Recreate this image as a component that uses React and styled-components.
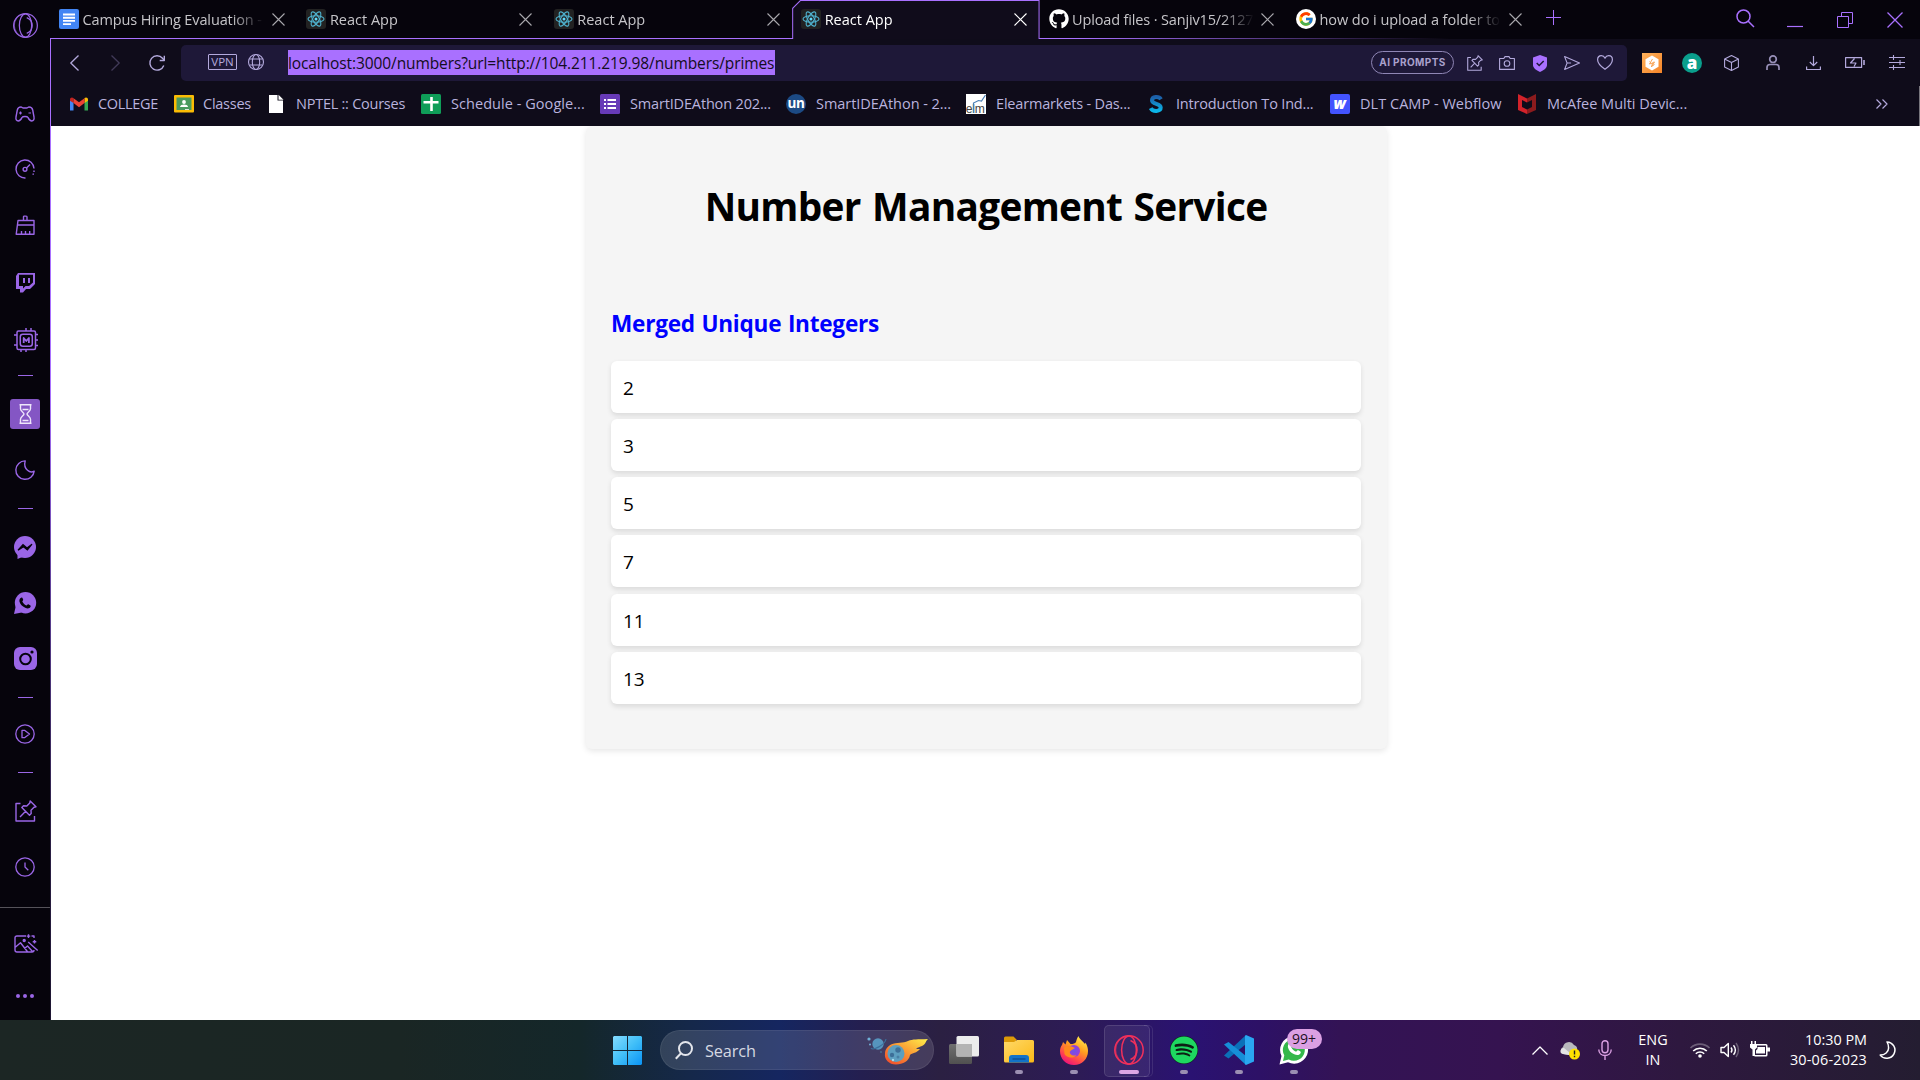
import React from 'react';
import styled, { createGlobalStyle } from 'styled-components';
import { FaGithub, FaSpotify } from 'react-icons/fa';
import { FcGoogle } from 'react-icons/fc';

const accent = '#a970ff';
const sideInk = '#9a66e6';
const toolInk = '#b3a9dc';

const Global = createGlobalStyle`
  * { box-sizing: border-box; }
  body {
    margin: 0;
    font-family: "Open Sans", "Noto Sans", sans-serif;
    background: #fff;
    overflow: hidden;
  }
  svg { display: block; flex: none; overflow: visible; }
`;

/* ---------- shell ---------- */
const Screen = styled.div`
  width: 1920px;
  height: 1080px;
  display: flex;
  flex-direction: column;
`;
const Browser = styled.div`
  height: 1020px;
  display: flex;
  background: #06040c;
`;
const Sidebar = styled.nav`
  width: 50px;
  display: flex;
  flex-direction: column;
`;
const SideSlot = styled.div`
  height: ${(p) => p.$h}px;
  padding-left: ${(p) => p.$pl || 0}px;
  display: flex;
  align-items: center;
  justify-content: center;
  flex: none;
`;
const Dash = styled.div`
  width: 15px;
  height: 1px;
  margin-left: 1px;
  background: ${sideInk};
`;
const SideLine = styled.div`
  height: 1px;
  background: #55535a;
`;
const PinnedBox = styled.div`
  width: 30px;
  height: 30px;
  border-radius: 3px;
  background: #8456c4;
  display: grid;
  place-items: center;
`;
const Main = styled.div`
  flex: 1;
  display: flex;
  flex-direction: column;
  min-width: 0;
`;

/* ---------- tab strip ---------- */
const TabStrip = styled.div`
  height: 39px;
  display: flex;
  background: linear-gradient(90deg, ${accent} 0, ${accent} 1030px, rgba(169, 112, 255, 0) 1400px) bottom / 100% 1px no-repeat;
`;
const TabBox = styled.div`
  width: 247.4px;
  height: 39px;
  display: flex;
  align-items: center;
  padding: 0 12.5px 1px 9px;
  gap: 3px;
  position: relative;
  z-index: 0;
  color: ${(p) => (p.$active ? '#fff' : '#c6c5c9')};
  ${(p) =>
    p.$active &&
    `
    background: ${accent};
    clip-path: polygon(8px 0, 100% 0, 100% 100%, 0 100%, 0 8px);
    &::before {
      content: "";
      position: absolute;
      z-index: -1;
      inset: 1px 1px 0 1px;
      background: #100c1b;
      clip-path: polygon(7.5px 0, 100% 0, 100% 100%, 0 100%, 0 7.5px);
    }
  `}
`;
const TabTitle = styled.div`
  flex: 1;
  min-width: 0;
  height: 24px;
  padding: 2px 0 0 0.5px;
  line-height: 22px;
  font-size: 14.5px;
  letter-spacing: ${(p) => p.$ls}px;
  white-space: nowrap;
  margin-right: 4px;
  mask-image: linear-gradient(90deg, #000 150px, transparent 182px);
`;
const ReactBadge = styled.div`
  width: 20px;
  height: 20px;
  border-radius: 3px;
  background: #222222;
  display: grid;
  place-items: center;
`;
const GoogleBadge = styled(ReactBadge)`
  border-radius: 50%;
  background: #fff;
`;
const WindowButtons = styled.div`
  display: flex;
  align-items: center;
  margin-left: auto;
`;
const Slot = styled.div`
  width: ${(p) => p.$w}px;
  display: flex;
  align-items: center;
  justify-content: center;
  flex: none;
`;

/* ---------- toolbar ---------- */
const Body = styled.div`
  flex: 1;
  display: flex;
  background: linear-gradient(180deg, ${accent} 0, ${accent} 350px, #5c3f94 560px, #2c2046 780px, #1d1531 100%);
  padding-left: 1px;
  min-height: 0;
`;
const Content = styled.div`
  flex: 1;
  display: flex;
  flex-direction: column;
  background: #0f0c1a;
`;
const Toolbar = styled.div`
  height: 47px;
  display: flex;
  align-items: center;
  padding: 0 4px 0 3px;
`;
const UrlField = styled.div`
  width: 1446px;
  height: 36px;
  margin: 1px 5px 0 3px;
  border-radius: 5px;
  background: #1e1838;
  display: flex;
  align-items: center;
  padding: 0 6px 0 27px;
`;
const Vpn = styled.div`
  width: 29px;
  height: 16px;
  border: 1px solid ${toolInk};
  border-radius: 1px;
  color: ${toolInk};
  font-size: 11.5px;
  line-height: 14px;
  text-align: center;
  margin: 0 11px 2px 0;
`;
const Url = styled.div`
  height: 25px;
  width: 487px;
  margin: 0 auto 1px 24px;
  line-height: 27px;
  font-size: 15.5px;
  letter-spacing: -0.1px;
  white-space: nowrap;
  background: ${accent};
  color: #130d22;
`;
const Prompts = styled.div`
  width: 83px;
  height: 23px;
  border: 1.5px solid #8f86b5;
  border-radius: 12px;
  color: #aaa1cc;
  font: 700 10px/20px Inter, sans-serif;
  letter-spacing: 0.4px;
  text-align: center;
  margin: 0 4.5px 1px 0;
`;
const Orange = styled.div`
  width: 20px;
  height: 20px;
  background: linear-gradient(135deg, #ffb35c, #f58428);
  display: grid;
  place-items: center;
`;

/* ---------- bookmarks ---------- */
const Bookmarks = styled.div`
  height: 40px;
  display: flex;
  align-items: center;
  padding: 0 31px 5px 18px;
  border-right: 1px solid #77757c;
  color: #b9b3de;
`;
const Bookmark = styled.div`
  width: ${(p) => p.$w}px;
  display: flex;
  align-items: center;
  gap: ${(p) => p.$gap}px;
  flex: none;
  white-space: nowrap;
  font-size: 14.5px;
  letter-spacing: ${(p) => p.$ls}px;
`;
const More = styled.div`
  margin-left: auto;
`;

/* ---------- page ---------- */
const Page = styled.main`
  flex: 1;
  background: #fff;
  overflow: hidden;
`;
const Card = styled.section`
  width: 801px;
  height: 623px;
  margin-left: 535px;
  padding: 0 26px 0 25px;
  border-radius: 6px;
  background: #f5f5f5;
  box-shadow: 0 2px 6px rgba(0, 0, 0, 0.1);
  display: flex;
  flex-direction: column;
`;
const Title = styled.h1`
  margin: 53px 0 0;
  height: 54px;
  line-height: 54px;
  font-size: 38.8px;
  letter-spacing: -0.7px;
  word-spacing: 2px;
  text-align: center;
  color: #000;
`;
const Subtitle = styled.h2`
  margin: 74px 0 0;
  height: 32px;
  line-height: 33px;
  font-size: 22.6px;
  letter-spacing: -0.25px;
  word-spacing: 1px;
  color: #0000ff;
`;
const List = styled.ul`
  margin: 22px 0 0;
  padding: 0;
  list-style: none;
  display: flex;
  flex-direction: column;
  gap: 6.15px;
`;
const Item = styled.li`
  height: 52px;
  padding-left: 12px;
  line-height: 55px;
  font-size: 19px;
  color: #000;
  background: #fff;
  border-radius: 6px;
  box-shadow: 0 2.5px 5px rgba(0, 0, 0, 0.1);
`;

/* ---------- taskbar ---------- */
const Taskbar = styled.footer`
  height: 60px;
  display: flex;
  align-items: center;
  padding: 0 13px 0 600px;
  background: linear-gradient(
    90deg,
    #1c2624 0, #1a2624 400px, #14272a 580px, #15284a 690px, #152660 780px, #241f50 860px,
    #2b2042 940px, #2d1b56 1080px, #2a1272 1190px, #2d1166 1260px, #331355 1340px,
    #351350 1500px, #2e183f 1680px, #241d31 1920px
  );
`;
const SearchBox = styled.div`
  width: 274px;
  height: 40px;
  margin: 0 3px 0 4.5px;
  padding: 0 4px 0 14px;
  border-radius: 20px;
  border: 1px solid rgba(255, 255, 255, 0.07);
  background: rgba(255, 255, 255, 0.13);
  display: flex;
  align-items: center;
  color: #d6d9e2;
  font-size: 16.3px;
  letter-spacing: -0.1px;
`;
const SearchText = styled.span`
  margin: 1px auto 0 12.5px;
`;
const AppSlot = styled.div`
  width: 55px;
  height: 60px;
  display: flex;
  flex-direction: column;
  align-items: center;
  position: relative;
`;
const IconArea = styled.div`
  height: 30px;
  margin: 15px 0 10px;
  display: grid;
  place-items: center;
`;
const Running = styled.div`
  width: ${(p) => (p.$on ? 20 : 8)}px;
  height: 4px;
  border-radius: 2px;
  background: ${(p) => (p.$on ? '#dba0e3' : '#9b8fb2')};
  margin-top: -5px;
`;
const ActiveApp = styled(AppSlot)`
  &::before {
    content: "";
    position: absolute;
    left: 2px;
    top: 5px;
    width: 44px;
    height: 50px;
    border-radius: 5px;
    border: 1px solid rgba(255, 255, 255, 0.12);
    background: rgba(255, 255, 255, 0.07);
  }
  &::after {
    content: "";
    position: absolute;
    left: 42px;
    top: 5px;
    width: 8px;
    height: 50px;
    border-radius: 0 5px 5px 0;
    border: 1px solid rgba(255, 255, 255, 0.1);
    border-left: 0;
  }
`;
const Count = styled.div`
  position: absolute;
  left: 20px;
  top: 9px;
  width: 35px;
  height: 20px;
  border-radius: 10px;
  background: #dba0e3;
  color: #1c0f22;
  font-size: 14px;
  line-height: 20px;
  text-align: center;
`;
const Tray = styled.div`
  margin-left: auto;
  display: flex;
  align-items: center;
  color: #fff;
`;
const Lines = styled.div`
  width: ${(p) => p.$w}px;
  padding-right: ${(p) => p.$pr || 0}px;
  text-align: ${(p) => p.$align};
  font-size: 14.4px;
  line-height: 20px;
  white-space: nowrap;
`;
const DateLine = styled.div`
  letter-spacing: 0.2px;
`;

/* ---------- drawing helpers ---------- */
const Line = ({ w = 20, h = w, box = `0 0 ${w} ${h}`, c = toolInk, s = 1.2, children }) => (
  <svg width={w} height={h} viewBox={box} fill="none" stroke={c} strokeWidth={s} strokeLinejoin="round">
    {children}
  </svg>
);

const Cross = ({ size = 13, c, s = 1.1 }) => (
  <Line w={size} c={c} s={s}>
    <path d={`M.5.5L${size - 0.5} ${size - 0.5}M${size - 0.5}.5L.5 ${size - 0.5}`} />
  </Line>
);

const OperaMark = ({ size, c, s = 1.2 }) => (
  <Line w={size} box="0 0 30 30" c={c} s={s}>
    <circle cx="15" cy="15" r="14.2" />
    <ellipse cx="15" cy="15" rx="7.4" ry="14" />
    <path d="M14 1.2C5 2 1.500 9 1.500 15s4 13 12.500 13.800" strokeOpacity=".6" />
    <path d="M16.500 5.500c5 2 6.500 6 6.500 9.500s-1.500 7.500-6.500 9.500" />
  </Line>
);

const ReactMark = () => (
  <ReactBadge>
    <Line w={18} box="-9 -9 18 18" c="#4fb3cf" s={1.1}>
      <ellipse rx="8" ry="3.200" />
      <ellipse rx="8" ry="3.200" transform="rotate(60)" />
      <ellipse rx="8" ry="3.200" transform="rotate(120)" />
      <circle r="1.500" fill="#61dafb" stroke="none" />
    </Line>
  </ReactBadge>
);

const DocsMark = () => (
  <svg width="20" height="20">
    <rect width="20" height="20" rx="2" fill="#4285f4" />
    <path d="M4 5.500h12M4 8.700h12M4 11.900h12M4 15.100h8" stroke="#fff" strokeWidth="1.900" />
  </svg>
);

const PinMark = ({ size, c, s }) => (
  <Line w={size} box="0 0 22 22" c={c} s={s}>
    <path d="M5.500 3.500H1v17.500h18.500v-5" />
    <path d="M15.200 1l5.800 5.800-2 .4-3 3 .2 3.300-1.700 1.700-7.700-7.700 1.700-1.700 3.300.2 3-3zM10.600 11.300L5 17" />
  </Line>
);

const Gamepad = () => (
  <Line w={20} h={16} c={sideInk} s={1.4}>
    <path d="M6 1C3.500 1 2.700 2 2.300 4L1 11c-.4 2.500.5 4 2.300 4 2 0 2.700-1.500 3.700-3.500.4-.8 1-1 3-1s2.600.2 3 1c1 2 1.700 3.500 3.700 3.500 1.800 0 2.700-1.500 2.300-4l-1.300-7C17.300 2 16.500 1 14 1c-1 0-1.300 1-2.300 1H8.300C7.300 2 7 1 6 1z" />
    <path d="M5.500 5.500v3M4 7h3M13.500 7h2.500" strokeWidth="1.200" />
  </Line>
);
const Gauge = () => (
  <Line w={20} c={sideInk} s={1.4}>
    <path d="M10.500 19A9 9 0 1 1 19 9.500" />
    <path d="M19 11.500v1.500M18.500 14.500l-.6 1.300" />
    <circle cx="10" cy="10.300" r="1.900" />
    <path d="M11.500 9l3.500-3.500" />
  </Line>
);
const Brush = () => (
  <Line w={20} c={sideInk} s={1.4}>
    <path d="M8.500 5.500V1.700c0-.8 3.500-.8 3.500 0v3.800M3 5.500h16v13.800H1.200zM2.500 10H19M6.500 19v-3M10.500 19v-3M14.700 19v-3" />
  </Line>
);
const Twitch = () => (
  <svg width="19" height="20" viewBox="0 0 19 20">
    <path fillRule="evenodd" fill={sideInk} d="M2 0h17v11l-5 5h-4l-3 3.500H4V16H0V3zM3 1.800V13h4v2.500L9.500 13H13l4-3.500V1.800zM7 5h2v5H7zM12 5h2v5h-2z" />
  </svg>
);
const Chip = () => (
  <Line w={24} c={sideInk} s={1.5}>
    <rect x="3" y="3" width="18.500" height="18.500" rx="1.500" />
    <rect x="6.300" y="6.300" width="12" height="12" rx="2.500" />
    <path d="M12 0v3M17 0v3M12 21v3M7 21v3M0 7h3M0 17h3M21 6.500h3M21 12h3M21 17.500h3" />
    <path d="M9.700 15v-5l2.600 3 2.600-3v5" strokeWidth="1.800" />
  </Line>
);
const Hourglass = () => (
  <Line w={13} h={20} c="#eee6fb" s={1.4}>
    <path d="M.5.8h12M.5 19.200h12M1.500.8v4c0 2.500 3.500 3.500 3.500 5.200s-3.500 2.700-3.500 5.200v4M11.500.8v4C11.500 7.300 8 8.300 8 10s3.500 2.700 3.500 5.200v4M3.500 5.500h6M3.500 16.500h6" />
  </Line>
);
const Crescent = () => (
  <Line w={20} c={sideInk} s={1.4}>
    <path d="M10.200.9a9.200 9.200 0 1 0 9 10.200c-2 1.200-4.600 1-6.700-.8-2.700-2.300-3.200-6-2.300-9.400z" />
  </Line>
);
const Messenger = () => (
  <svg width="22" height="23">
    <circle cx="11" cy="11" r="11" fill={sideInk} />
    <path d="M3.500 16v7l6-2.500z" fill={sideInk} />
    <path d="M4 14.200l5-5.500 4 3.300 5-3.800-4.600 5.800-3.900-3.300z" fill="#06040c" stroke="#06040c" strokeWidth="1.200" />
  </svg>
);
const WhatsSide = () => (
  <svg width="22" height="22">
    <circle cx="11.500" cy="10.700" r="10.700" fill={sideInk} />
    <path d="M0 22l1.800-8 6 6.500z" fill={sideInk} />
    <path d="M6.300 6.300c1.400-1.500 2.100-1 2.700.8.4 1.100 0 1.500-.7 2.300.9 2 2.400 3.300 4.400 4.200.7-.9 1.200-1.600 2-1.200 2.300 1 2.400 1.300 1.700 2.600-1 1.700-3 1.700-5.200.8-3-1.300-5-3.500-5.700-6-.3-1.300 0-2.600.8-3.500z" fill="#06040c" />
  </svg>
);
const Insta = () => (
  <svg width="23" height="23">
    <rect width="23" height="23" rx="6" fill={sideInk} />
    <circle cx="11.500" cy="12" r="5.300" fill="none" stroke="#06040c" strokeWidth="2" />
    <circle cx="18" cy="5" r="1.600" fill="#06040c" />
  </svg>
);
const PlayRound = () => (
  <Line w={20} c={sideInk} s={1.3}>
    <circle cx="10" cy="10" r="9.200" />
    <path d="M7 6.300v7.400h2.500L14.500 10 9.500 6.300z" />
  </Line>
);
const Clock = () => (
  <Line w={20} c={sideInk} s={1.3}>
    <circle cx="10" cy="10" r="9.200" />
    <path d="M10 5.500V10l3.300 3.300" />
  </Line>
);
const MagicImage = () => (
  <Line w={24} h={20} c={sideInk} s={1.4}>
    <path d="M12 2H3Q1 2 1 4v12q0 2 2 2h15q2 0 2-2M1 13.500l5.500-4.700 7 9M10.500 14.500l3-2.500 5.500 6" />
    <circle cx="10.200" cy="6.500" r="1" fill={sideInk} />
    <path d="M14.200 8l9.500 8.500M14.500.3v3.600M12.700 2.100h3.600M20.500 6v3.600M18.700 7.800h3.600M17.500 2H20v2" />
  </Line>
);
const Dots = () => (
  <svg width="18" height="4" fill={sideInk}>
    <circle cx="2" cy="2" r="2" /><circle cx="9" cy="2" r="2" /><circle cx="16" cy="2" r="2" />
  </svg>
);

/* ---------- bookmark marks ---------- */
const marks = {
  gmail: (
    <svg width="20" height="20">
      <path d="M1 5v11.500h3.500V8z" fill="#4285f4" /><path d="M15.500 8v8.500H19V5z" fill="#34a853" />
      <path d="M1 5.500c0-2 2-2.700 3.500-1.500v5L1 6.700z" fill="#c5221f" /><path d="M19 5.500c0-2-2-2.700-3.500-1.500v5L19 6.700z" fill="#fbbc04" />
      <path d="M4.500 4.200L10 8.300l5.500-4.100V9L10 13.200 4.500 9z" fill="#ea4335" />
    </svg>
  ),
  classroom: (
    <svg width="20" height="20">
      <rect y="1" width="20" height="17.500" rx="1" fill="#fbbc04" /><rect x="2.500" y="3.500" width="15" height="12.500" fill="#4a9a5e" />
      <circle cx="10" cy="8" r="1.900" fill="#fff" /><path d="M6 13c0-3.300 8-3.300 8 0z" fill="#fff" /><path d="M11 15h4v1h-4z" fill="#dfe8df" />
    </svg>
  ),
  file: (
    <svg width="20" height="20">
      <path d="M2 1h8.500v5.500H16V19H2z" fill="#fff" /><path d="M11.500.8l5 5h-5z" fill="#fff" />
    </svg>
  ),
  sheet: (
    <svg width="20" height="20">
      <rect width="20" height="20" rx="1.500" fill="#0f9d58" /><path d="M10.500 3v14M2.500 8.300h15" stroke="#fff" strokeWidth="2.600" />
    </svg>
  ),
  form: (
    <svg width="20" height="20">
      <rect width="20" height="20" rx="1.500" fill="#673ab7" />
      <path d="M4 6h2M4 10h2M4 14h2M7.500 6H16M7.500 10H16M7.500 14H16" stroke="#fff" strokeWidth="2.100" />
    </svg>
  ),
  un: (
    <svg width="20" height="20">
      <circle cx="10" cy="10" r="10" fill="#1c4a84" />
      <text x="10" y="14" textAnchor="middle" fontFamily="Open Sans" fontWeight="700" fontSize="13.500" letterSpacing="-.3" fill="#fff">un</text>
    </svg>
  ),
  elm: (
    <svg width="20" height="20">
      <rect width="20" height="20" fill="#fff" />
      <text x="-.3" y="19" fontFamily="Liberation Sans" fontSize="12" textLength="19" lengthAdjust="spacingAndGlyphs" fill="#444">elm</text>
      <path d="M7.500 19V9l5-2.500 3 .5L19.500 1" fill="none" stroke="#4a7fb5" strokeWidth="1.200" />
    </svg>
  ),
  swirl: (
    <svg width="20" height="20">
      <defs><linearGradient id="sw" x2="0" y2="1"><stop offset="0" stopColor="#1d5fa8" /><stop offset="1" stopColor="#0bb5e8" /></linearGradient></defs>
      <path d="M15 5.200C13 2 6 2 6 6.300c0 4.300 8.700 3 8.700 7.300 0 4.200-8 4.400-10 .5" fill="none" stroke="url(#sw)" strokeWidth="4" />
    </svg>
  ),
  webflow: (
    <svg width="20" height="20">
      <rect width="20" height="20" rx="2" fill="#4353ff" />
      <text x="9.800" y="14.800" textAnchor="middle" fontFamily="Open Sans" fontWeight="800" fontStyle="italic" fontSize="15" fill="#fff">w</text>
    </svg>
  ),
  mcafee: (
    <svg width="20" height="20">
      <path d="M1 0l9 4.500v4L5 6v7l5 2.500V20l-9-4z" fill="#d3222a" /><path d="M19 0l-9 4.500v4L15 6v7l-5 2.500V20l9-4z" fill="#8c1b1d" />
    </svg>
  ),
};

const bookmarks = [
  ['gmail', 'COLLEGE', 105, -0.3, 9],
  ['classroom', 'Classes', 93, -0.25, 9],
  ['file', 'NPTEL :: Courses', 154, -0.25, 9],
  ['sheet', 'Schedule - Google...', 179, 0.05],
  ['form', 'SmartIDEAthon 202...', 186, -0.16],
  ['un', 'SmartIDEAthon - 2...', 180, -0.04],
  ['elm', 'Elearmarkets - Das...', 180, -0.18],
  ['swirl', 'Introduction To Ind...', 184, -0.18],
  ['webflow', 'DLT CAMP - Webflow', 187, 0.03],
  ['mcafee', 'McAfee Multi Devic...', 180, 0],
];

const tabs = [
  { icon: <DocsMark />, title: 'Campus Hiring Evaluation -', ls: -0.12 },
  { icon: <ReactMark />, title: 'React App', ls: 0 },
  { icon: <ReactMark />, title: 'React App', ls: 0 },
  { icon: <ReactMark />, title: 'React App', ls: 0, active: true },
  { icon: <FaGithub size={20} color="#fff" />, title: 'Upload files · Sanjiv15/2127', ls: -0.15 },
  { icon: <GoogleBadge><FcGoogle size={16} /></GoogleBadge>, title: 'how do i upload a folder to', ls: -0.05 },
];

/* ---------- taskbar marks ---------- */
const WindowsMark = () => (
  <svg width="29" height="29">
    <defs><linearGradient id="win" x2="1" y2="1"><stop offset="0" stopColor="#84dcff" /><stop offset=".5" stopColor="#41bff8" /><stop offset="1" stopColor="#0a93f5" /></linearGradient></defs>
    <path d="M1 0h13v14H0V1zM15 0h13l1 1v13H15zM0 15h14v14H1l-1-1zM15 15h14v13l-1 1H15z" fill="url(#win)" />
  </svg>
);
const Comet = () => (
  <svg width="62" height="30">
    <defs>
      <linearGradient id="flame" x1="0" y1="1" x2="1" y2="0"><stop offset="0" stopColor="#f0432c" /><stop offset=".5" stopColor="#fb9a34" /><stop offset="1" stopColor="#fff04a" /></linearGradient>
    </defs>
    <circle cx="11" cy="9" r="5.700" fill="#5694bd" />
    <path d="M4 13c2 3 14-3 15-9" fill="none" stroke="#3a6f9c" strokeWidth="1.200" />
    <circle cx="2" cy="4" r="1.600" fill="#6fb0d8" /><circle cx="3" cy="9.500" r="1" fill="#6fb0d8" /><circle cx="14" cy="17" r=".9" fill="#48708f" />
    <path d="M24 9.500c6-2.500 12-1 17-3.500 5-2 9-1.500 20-2-3 3-2 5-6 7-2 1-4 1-6 3l4 0c-3 4-8 4-10 6-1 6-7 9.500-14 9.500-7 0-12-5-11-11 0-4 3-7.500 6-9z" fill="url(#flame)" />
    <circle cx="29" cy="18.500" r="8.500" fill="#5d9fc0" />
    <circle cx="31" cy="15" r="2.700" fill="#3d6f98" /><circle cx="25" cy="20" r="2.200" fill="#3d6f98" /><circle cx="31" cy="22" r="1.500" fill="#487fa5" /><circle cx="26" cy="25" r="1.200" fill="#a9dcee" />
  </svg>
);
const TaskView = () => (
  <svg width="30" height="28">
    <defs>
      <linearGradient id="tvb" x2="0" y2="1"><stop offset="0" stopColor="#707070" /><stop offset="1" stopColor="#505050" /></linearGradient>
    </defs>
    <rect y="8" width="23" height="20" rx="1.500" fill="url(#tvb)" />
    <rect x="7.500" y="0" width="22.500" height="20.500" rx="1.500" fill="#ececec" />
    <rect x="7.500" y="8" width="15.500" height="12.500" fill="#b3b3b3" />
  </svg>
);
const Folder = () => (
  <svg width="30" height="28">
    <defs><linearGradient id="fold" x2="1" y2="1"><stop offset="0" stopColor="#ffd968" /><stop offset="1" stopColor="#fbb917" /></linearGradient></defs>
    <path d="M0 2q0-1.500 1.500-1.500h8L13 4h-1v6H0z" fill="#dd9a07" />
    <path d="M0 6h10l3-2h15.500q1.500 0 1.500 1.500V25q0 1.500-1.500 1.500h-27Q0 26.500 0 25z" fill="url(#fold)" />
    <path d="M5 26.500V22q0-3 3-3h14q3 0 3 3v4.500z" fill="#1273c8" /><path d="M8.500 23h13" stroke="#0a4d90" strokeWidth="1.300" />
  </svg>
);
const Firefox = () => (
  <svg width="28" height="29">
    <defs>
      <linearGradient id="ff" x1=".8" y1="0" x2=".25" y2="1"><stop offset="0" stopColor="#fff04e" /><stop offset=".4" stopColor="#ffa01f" /><stop offset=".75" stopColor="#ff4150" /><stop offset="1" stopColor="#ea0d80" /></linearGradient>
      <radialGradient id="ffc"><stop offset="0" stopColor="#6a55e8" /><stop offset="1" stopColor="#9a3ed8" /></radialGradient>
    </defs>
    <path d="M2 9l1-3 2.500 2.500L7 4l3.500 4c3 0 4.500-.5 5.500-2 .5-2 1-4 2.500-6 .5 3 4.500 5 6.500 8l.5-1.500C27.500 10 28 13 28 15c0 8-6 14-14 14S0 23 0 15c0-2 .7-4.500 2-6z" fill="url(#ff)" />
    <circle cx="14" cy="15" r="6" fill="url(#ffc)" />
    <path d="M4 12c3-3 7-2 11 0-2 2-4 1.500-5 3.500-1 3 3 5 6.500 3.500-3 4-10 3-12-1z" fill="#ff8a1d" />
  </svg>
);
const VsCode = () => (
  <svg width="30" height="30">
    <path d="M22 0v9L4.500 23.500 0 20.500z" fill="#0b70b8" />
    <path d="M22 30v-9L4.500 7 0 9.500z" fill="#168fd8" />
    <path d="M22 0l8 3.500v23L22 30l-1-1V1z" fill="#2aa7f0" />
  </svg>
);
const WhatsApp = () => (
  <svg width="30" height="30">
    <path d="M.5 29.500l2-8.500A14 13.700 0 1 1 9 27.300z" fill="#fff" />
    <path d="M4 26l1.300-5.700A11 10.800 0 1 1 9.800 24.500z" fill="#34b84a" />
    <path d="M10 8.500c1.500-1.500 2.500-1 3 1 .5 1.500 0 1.700-.7 2.700 1 2.200 2.700 3.600 4.900 4.500 1-1 1.300-1.700 2.500-1.200 2.500 1.200 2.500 1.700 1.500 3.200-1.200 1.700-3.500 1.600-6 .6-3.500-1.400-5.500-4-6.200-6.800-.3-1.500.1-3 1-4z" fill="#fff" />
  </svg>
);
const SpotifyMark = styled.div`
  width: 28px;
  height: 28px;
  border-radius: 50%;
  background: #0d1f14;
  display: grid;
  place-items: center;
`;

const Side = () => (
  <Sidebar>
    <SideSlot $h={51}><OperaMark size={25} c={sideInk} s={1.5} /></SideSlot>
    <SideSlot $h={35} />
    <SideSlot $h={55}><Gamepad /></SideSlot>
    <SideSlot $h={55}><Gauge /></SideSlot>
    <SideSlot $h={58}><Brush /></SideSlot>
    <SideSlot $h={57}><Twitch /></SideSlot>
    <SideSlot $h={57} $pl={2}><Chip /></SideSlot>
    <SideSlot $h={14}><Dash /></SideSlot>
    <SideSlot $h={64}><PinnedBox><Hourglass /></PinnedBox></SideSlot>
    <SideSlot $h={48}><Crescent /></SideSlot>
    <SideSlot $h={28}><Dash /></SideSlot>
    <SideSlot $h={50}><Messenger /></SideSlot>
    <SideSlot $h={62}><WhatsSide /></SideSlot>
    <SideSlot $h={49}><Insta /></SideSlot>
    <SideSlot $h={28}><Dash /></SideSlot>
    <SideSlot $h={46}><PlayRound /></SideSlot>
    <SideSlot $h={31}><Dash /></SideSlot>
    <SideSlot $h={46} $pl={2}><PinMark size={22} c={sideInk} s={1.4} /></SideSlot>
    <SideSlot $h={65}><Clock /></SideSlot>
    <SideSlot $h={8} />
    <SideLine />
    <SideSlot $h={72} $pl={2}><MagicImage /></SideSlot>
    <SideSlot $h={31}><Dots /></SideSlot>
  </Sidebar>
);

const Tabs = () => (
  <TabStrip>
    {tabs.map((t, i) => (
      <TabBox key={i} $active={t.active}>
        {t.icon}
        <TabTitle $ls={t.ls}>{t.title}</TabTitle>
        <Cross c={t.active ? '#fff' : '#a9a8ad'} />
      </TabBox>
    ))}
    <Slot $w={38}>
      <Line w={15} c={accent} s={1}><path d="M7.500 0v15M0 7.500h15" transform="translate(0 -2)" /></Line>
    </Slot>
    <WindowButtons>
      <Slot $w={50}>
        <Line w={18} c={accent} s={1.5}><g transform="translate(0 -1)"><circle cx="7.500" cy="6.500" r="6.500" /><path d="M12 11l6 6" /></g></Line>
      </Slot>
      <Slot $w={50}><Line w={16} c={accent}><path d="M0 14.500h16" /></Line></Slot>
      <Slot $w={50}><Line w={16} c={accent} s={1}><path d="M.5 4.500h11v11H.5zM4.500 4.500v-4h11v11h-4" /></Line></Slot>
      <Slot $w={50}><Cross size={16} c={accent} s={1.3} /></Slot>
    </WindowButtons>
  </TabStrip>
);

const Bar = () => (
  <Toolbar>
    <Slot $w={41}><Line w={9} h={16} s={1.3}><path d="M8.500.5L.8 8l7.700 7.500" /></Line></Slot>
    <Slot $w={41}><Line w={9} h={16} c="#413a58" s={1.3}><path d="M.5.5L8.200 8 .5 15.500" /></Line></Slot>
    <Slot $w={42}>
      <Line w={16} s={1.4}><path d="M14.800 10.500A7.200 7.200 0 1 1 13.500 3.200L15 5" /><path d="M15.300.8V5.500H10.700" /></Line>
    </Slot>
    <UrlField>
      <Vpn>VPN</Vpn>
      <Line w={16} s={1.1}>
        <g transform="translate(0 -1)"><circle cx="8" cy="8" r="7.500" /><ellipse cx="8" cy="8" rx="3.700" ry="7.500" /><path d="M1.500 5h13M1.500 11h13" /></g>
      </Line>
      <Url>localhost:3000/numbers?url=http://104.211.219.98/numbers/primes</Url>
      <Prompts>AI PROMPTS</Prompts>
      <Slot $w={32.5}><PinMark size={16} c={toolInk} s={1.5} /></Slot>
      <Slot $w={32.5}>
        <Line w={16} h={14} s={1.1}><path d="M.6 2.500h4.200L6 .6h4l1.200 1.900h4.200v10.900H.6z" /><circle cx="8" cy="7.500" r="2.800" /></Line>
      </Slot>
      <Slot $w={32.5}>
        <svg width="14" height="17"><path d="M7 0l7 2.500v7.500c0 3-3 5-7 7-4-2-7-4-7-7V2.500z" fill={accent} /><path d="M3.700 8l2.500 2.500 4.500-4.500" fill="none" stroke="#1e1838" strokeWidth="1.500" /></svg>
      </Slot>
      <Slot $w={32.5}><Line w={16} h={14} s={1.1}><path d="M.6.6L15.500 7 .6 13.400l2.500-6.400zM3.100 7h4" /></Line></Slot>
      <Slot $w={32.5}><Line w={16} h={16} s={1.2}><path d="M8 14.300C4 11.500.6 8.500.6 4.700.6 2.300 2.300.7 4.300.7 6 .7 7.300 1.600 8 3.200 8.700 1.600 10 .7 11.700.7c2 0 3.700 1.600 3.700 4 0 3.800-3.400 6.800-7.400 9.600z" /></Line></Slot>
    </UrlField>
    <Slot $w={40}>
      <Orange><svg width="16" height="16"><path d="M8 .5l6.500 3.700v7.600L8 15.500l-6.500-3.700V4.200z" fill="#fff" /><path d="M8.500 4L5.500 9l3-1-1 4 3-5-2 .5M5.500 6.500l1 1M9 10.500l1.500-1" fill="none" stroke="#f79a44" strokeWidth=".9" /></svg></Orange>
    </Slot>
    <Slot $w={40}>
      <svg width="20" height="20"><circle cx="10" cy="10" r="10" fill="#0a9f8c" /><text x="10" y="15.500" textAnchor="middle" fontFamily="Open Sans" fontWeight="800" fontSize="17" fill="#fff">a</text></svg>
    </Slot>
    <Slot $w={39}><Line w={15} h={16} s={1.1}><path d="M7.500.6l6.900 3.400v8L7.500 15.400.6 12V4zM.6 4l6.900 3.500L14.400 4M7.500 7.500v8" /></Line></Slot>
    <Slot $w={44}><Line w={14} h={15} c="#9890b8" s={1.7}><circle cx="7" cy="4.200" r="3.300" /><path d="M1 15v-2.500q0-3 3-3h6q3 0 3 3V15" /></Line></Slot>
    <Slot $w={37}><Line w={15} s={1.2}><path d="M7.500 1v9.500M3.800 7l3.700 3.700L11.200 7M.6 11.500v3h13.800v-3" /></Line></Slot>
    <Slot $w={46}><Line w={20} h={12} s={1.2}><path d="M.6.6h16v9.800H.6zM9.500 1.500L5.500 6h5.500l-2 3.500" /><path d="M19 3v5" strokeWidth="1.600" /></Line></Slot>
    <Slot $w={38}><Line w={16} h={15} s={1.1}><path d="M0 2.500h16M0 7.500h16M0 12.500h16M4.500 0v5M11 5v5M4.500 10v5" /></Line></Slot>
  </Toolbar>
);

const AppIcon = ({ children, running }) => (
  <AppSlot>
    <IconArea>{children}</IconArea>
    {running && <Running />}
  </AppSlot>
);

export default function App() {
  return (
    <Screen>
      <Global />
      <Browser>
        <Side />
        <Main>
          <Tabs />
          <Body>
            <Content>
              <Bar />
              <Bookmarks>
                {bookmarks.map(([m, text, w, ls, gap = 10]) => (
                  <Bookmark key={text} $w={w} $ls={ls} $gap={gap}>{marks[m]}{text}</Bookmark>
                ))}
                <More><Line w={12} h={10} s={1.2}><path d="M.5.5L5 5 .5 9.500M6.500.5L11 5 6.500 9.500" /></Line></More>
              </Bookmarks>
              <Page>
                <Card>
                  <Title>Number Management Service</Title>
                  <Subtitle>Merged Unique Integers</Subtitle>
                  <List>
                    {[2, 3, 5, 7, 11, 13].map((n) => <Item key={n}>{n}</Item>)}
                  </List>
                </Card>
              </Page>
            </Content>
          </Body>
        </Main>
      </Browser>
      <Taskbar>
        <AppIcon><WindowsMark /></AppIcon>
        <SearchBox>
          <Line w={18} h={19} c="#e4e6ec" s={2}><circle cx="10.500" cy="7.500" r="6.500" /><path d="M6 12.200L.8 17.700" /></Line>
          <SearchText>Search</SearchText>
          <Comet />
        </SearchBox>
        <AppIcon><TaskView /></AppIcon>
        <AppIcon running><Folder /></AppIcon>
        <AppIcon running><Firefox /></AppIcon>
        <ActiveApp>
          <IconArea><OperaMark size={30} c="#f0214f" s={1.5} /></IconArea>
          <Running $on />
        </ActiveApp>
        <AppIcon running><SpotifyMark><FaSpotify size={28} color="#1ed760" /></SpotifyMark></AppIcon>
        <AppIcon running><VsCode /></AppIcon>
        <AppSlot>
          <IconArea><WhatsApp /></IconArea>
          <Running />
          <Count>99+</Count>
        </AppSlot>
        <Tray>
          <Slot $w={40}><Line w={16} h={9} c="#fff" s={1.3}><path d="M.5 8.500L8 1l7.500 7.500" /></Line></Slot>
          <Slot $w={20}>
            <svg width="20" height="16">
              <path d="M3 12a4 4 0 0 1 0-7 6 6 0 0 1 11-2 4 4 0 0 1 3 5L9 13z" fill="#b9b9bd" /><path d="M3 12a3 3 0 0 1 1-6l6 5-1 2z" fill="#e4e4e6" />
              <circle cx="14.500" cy="12" r="5.500" fill="#ffe100" /><path d="M14.500 8.500v4M14.500 13.700v1.500" stroke="#222" strokeWidth="1.400" />
            </svg>
          </Slot>
          <Slot $w={50}><Line w={14} h={20} c="#dba0e3" s={1.4}><rect x="4" y=".7" width="6" height="12" rx="3" /><path d="M.8 9.500c0 8 12.400 8 12.400 0M7 15.500V20" /></Line></Slot>
          <Lines $w={50} $pr={4} $align="center"><div>ENG</div><div>IN</div></Lines>
          <Slot $w={40}>
            <Line w={20} h={15} c="#fff" s={1.6}>
              <path d="M.5 5a13.500 13.500 0 0 1 19 0" strokeOpacity=".3" />
              <path d="M3.200 8a9.600 9.600 0 0 1 13.600 0M5.800 10.700a6 6 0 0 1 8.400 0" /><circle cx="10" cy="13" r="1.800" fill="#fff" stroke="none" />
            </Line>
          </Slot>
          <Slot $w={20}>
            <Line w={20} h={16} c="#fff" s={1.4}>
              <path d="M1 5.500h3L8.300 1.500v13L4 10.500H1zM11 5.500q2 2.500 0 5M13.500 3.200q3.800 4.800 0 9.600" /><path d="M16 1q5 7 0 14" strokeOpacity=".3" />
            </Line>
          </Slot>
          <Slot $w={40}>
            <svg width="20" height="18" fill="#fff">
              <path fillRule="evenodd" d="M7 3h9q1.500 0 1.500 1.500V6.500H20v4h-2.500V14q0 1.500-1.500 1.500H4.500V14H16V4.500H7z" />
              <path d="M7.500 6H15v6.500H6V9.500l1.500-1.500z" />
              <path d="M0 3h1V0h1.500v3h2V0H6v3h1v3.500L5 8.500V15H2.500V8.500L0 6.500z" />
            </svg>
          </Slot>
          <Lines $w={87} $align="right"><div>10:30 PM</div><DateLine>30-06-2023</DateLine></Lines>
          <Slot $w={40}><Line w={17} h={18} c="#fff" s={1.5}><path d="M8 .9a8.200 8.200 0 1 1-6.800 13.200C6 14 9.500 11 9.600 7c0-2.500-.4-4.300-1.600-6.100z" /></Line></Slot>
        </Tray>
      </Taskbar>
    </Screen>
  );
}
